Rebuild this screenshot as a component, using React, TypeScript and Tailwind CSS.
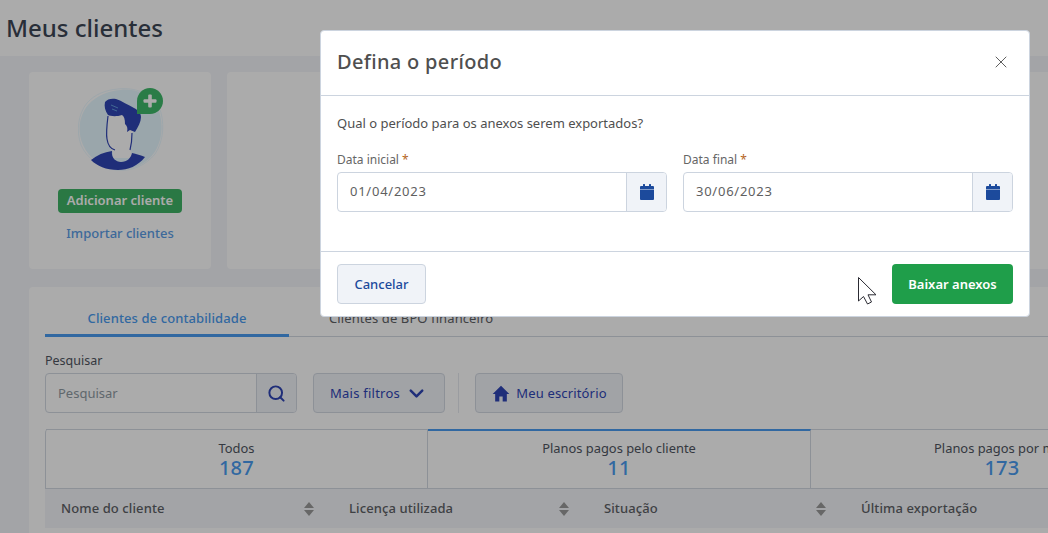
import React from "react";
import { Search, ChevronDown, X } from "lucide-react";

const font = "font-['Noto_Sans','Open_Sans',sans-serif]";

function Avatar() {
  return (
    <svg width="90" height="86" viewBox="0 0 90 86" className="block">
      <path d="M42 2C56 0 72 6 79 19C86 32 85 52 76 65C68 76 54 83 40 81C25 79 11 71 5 57C-1 43 1 28 10 17C18 8 30 3 42 2Z" fill="#e6f8ff" />
      <path d="M40 1C56 -1 74 5 81 19C87 33 86 53 77 66C68 77 54 84 38 82C23 80 9 71 3 57C-2 43 0 26 9 15C17 6 28 2 40 1Z" fill="none" stroke="#e6f8ff" strokeWidth="0.8" />
      <path d="M30 27L29 52C30 60 34 62 35 64L35 70L54 70L53 62L54 45L60 36L58 25Z" fill="#fff" />
      <path d="M13 72C19 67 26 64 34 63C33 70 38 74 43 74C49 74 53 70 54 65C58 66 63 67 67 69C60 78 50 82 40 82C28 82 19 78 13 72Z" fill="#2f45b5" />
      <path d="M30 28C29 36 28 46 29 51C30 58 33 61 37 62" fill="none" stroke="#2f45b5" strokeWidth="1.2" />
      <path d="M54 45C54 52 53 58 52 62" fill="none" stroke="#2f45b5" strokeWidth="1.2" />
      <path d="M27 14C29 11 34 10 38 11C44 13 50 17 56 20C60 22 63 25 63 29C63 34 60 39 57 44L52 42L49 44C50 40 49 38 47 36C47 31 46 28 44 27C38 29 32 28 30 27C27 23 26 18 27 14Z" fill="#2f45b5" />
      <path d="M33 17L40 20M34 21L39 23" stroke="#6fb2e6" strokeWidth="0.8" />
      <path d="M59 13C59 5.8 64.8 0 72 0C79.2 0 85 5.8 85 13C85 20.2 79.2 26 72 26L59 26Z" fill="#3fb96a" />
      <rect x="70.2" y="6.5" width="3.6" height="13" rx="1" fill="#fff" />
      <rect x="65.5" y="11.2" width="13" height="3.6" rx="1" fill="#fff" />
    </svg>
  );
}

function SortIcon() {
  return (
    <svg width="10" height="14" viewBox="0 0 10 14" className="block">
      <path d="M5 0L10 6H0Z M0 8H10L5 14Z" fill="#9a9a9a" />
    </svg>
  );
}

function CalendarIcon() {
  return (
    <svg width="14" height="16" viewBox="0 0 14 16" className="block" fill="#1c4a9c">
      <rect x="3" y="0" width="2" height="3" rx="0.5" />
      <rect x="9" y="0" width="2" height="3" rx="0.5" />
      <path d="M1 2H13A1 1 0 0 1 14 3V5H0V3A1 1 0 0 1 1 2Z" />
      <path d="M0 5.5H14V15A1 1 0 0 1 13 16H1A1 1 0 0 1 0 15Z" />
    </svg>
  );
}

function Stat({ label, value, active, first }: { label: string; value: string; active?: boolean; first?: boolean }) {
  return (
    <div className={`${first ? "w-[382px]" : "w-[383px]"} shrink-0 flex flex-col items-center border-r border-[#d3d9e2] ${active ? "border-t-2 border-t-[#4a9bf0] pt-[9px]" : "border-t border-t-[#d3d9e2] pt-[10px]"}`}>
      <span className="text-[12.9px] leading-[17px] text-[#4f5561]">{label}</span>
      <span className="text-[20px] leading-[22px] font-medium tracking-[0.3px] text-[#4a9bf0]">{value}</span>
    </div>
  );
}

function Th({ label, width }: { label: string; width: string }) {
  return (
    <div className={`${width} shrink-0 flex items-center justify-between pr-[19px] pl-4`}>
      <span className="text-[13px] font-medium tracking-[0.1px] text-[#5e6166]">{label}</span>
      <SortIcon />
    </div>
  );
}

function DateField({ label, value }: { label: string; value: string }) {
  return (
    <div className="flex-1 flex flex-col">
      <label className="text-[12px] leading-[18px] text-[#666] mb-[3px] pt-px">
        {label} <span className="text-[#b5651d]">*</span>
      </label>
      <div className="flex h-10 rounded border border-[#ccd4df] overflow-hidden">
        <div className="flex-1 flex items-center pl-3 text-[13px] text-[#5f5f5f] tracking-[0.75px]">{value}</div>
        <div className="w-10 flex items-center justify-center bg-[#f0f3f8] border-l border-[#ccd4df]">
          <CalendarIcon />
        </div>
      </div>
    </div>
  );
}

export default function App() {
  return (
    <div className={`relative w-[1048px] h-[533px] overflow-hidden bg-[#f3f5f9] ${font}`}>
      <header className="h-14 bg-white flex items-center pl-[6px]">
        <h1 className="text-[24px] font-medium text-[#3d4656]">Meus clientes</h1>
      </header>

      <main className="pl-[29px] pt-4 w-[1200px]">
        <div className="flex gap-4 h-[197px]">
          <div className="w-[182px] bg-white rounded flex flex-col items-center pt-4">
            <div className="ml-[6px]"><Avatar /></div>
            <button className="mt-[15px] w-[124px] h-6 rounded bg-[#3fb466] text-white text-[13px] font-semibold">Adicionar cliente</button>
            <a className="mt-[11px] text-[13px] font-medium text-[#5b9de6]">Importar clientes</a>
          </div>
          <div className="flex-1 bg-white rounded" />
        </div>

        <section className="mt-[18px] bg-white rounded pt-4 px-4 h-[260px]">
          <div className="flex border-b border-[#d3d9e2] h-[34px]">
            <div className="w-[244px] h-[34px] text-center text-[13px] tracking-[0.1px] font-medium text-[#4a9bf0] border-b-[3px] border-[#4a9bf0] pt-[6px]">Clientes de contabilidade</div>
            <div className="ml-10 text-[13px] tracking-[0.1px] text-[#5e6166] pt-[6px]">Clientes de BPO financeiro</div>
          </div>

          <div className="mt-[15px] text-[12.5px] leading-[18px] text-[#4f5561]">Pesquisar</div>
          <div className="mt-[3px] flex items-center h-10">
            <div className="w-[252px] h-10 flex rounded border border-[#d3d9e2] overflow-hidden">
              <div className="flex-1 flex items-center pl-3 pt-px text-[13px] text-[#8f9aa3]">Pesquisar</div>
              <div className="w-10 flex items-center justify-center bg-[#f0f3f8] border-l border-[#d3d9e2]">
                <Search size={19} strokeWidth={2.5} className="text-[#2f45b5]" />
              </div>
            </div>
            <button className="ml-4 w-[132px] h-10 pt-px rounded border border-[#d3d9e2] bg-[#f0f3f8] flex items-center justify-center gap-[5px] text-[13px] tracking-[0.25px] text-[#2f45b5]">
              Mais filtros <ChevronDown size={23} strokeWidth={2.6} />
            </button>
            <div className="ml-[13px] w-px h-10 bg-[#e6e9ef]" />
            <button className="ml-4 w-[148px] h-10 pt-px rounded border border-[#d3d9e2] bg-[#f0f3f8] flex items-center justify-center gap-[5px] text-[13px] tracking-[0.15px] text-[#2f45b5]">
              <svg width="20" height="20" viewBox="0 0 24 24" fill="#2f45b5" className="block"><path d="M10 21v-6h4v6h5v-9h3L12 2 2 12h3v9z" /></svg>
              Meu escritório
            </button>
          </div>

          <div className="mt-4 flex h-[59px] border-l border-[#d3d9e2] rounded-tl">
            <Stat label="Todos" value="187" first />
            <Stat label="Planos pagos pelo cliente" value="11" active />
            <Stat label="Planos pagos por mim" value="173" />
          </div>
          <div className="flex h-10 bg-[#f3f5f9] border-t border-[#d3d9e2]">
            <Th label="Nome do cliente" width="w-[288px]" />
            <Th label="Licença utilizada" width="w-[255px]" />
            <Th label="Situação" width="w-[257px]" />
            <Th label="Última exportação" width="w-[300px]" />
          </div>
        </section>
      </main>

      <div className="absolute inset-0 bg-black/[0.33]" />

      <div className="absolute left-[320px] top-[30px] w-[710px] h-[287px] bg-white rounded border border-[#ccd4df] flex flex-col">
        <div className="h-[65px] border-b border-[#ccd4df] flex items-center justify-between pl-4 pr-[18px] pb-[2px]">
          <h2 className="text-[20px] font-medium text-[#4f4f4f] tracking-[0.32px]">Defina o período</h2>
          <X size={20} strokeWidth={1.1} className="text-[#4f4f4f]" />
        </div>
        <div className="h-[156px] border-b border-[#ccd4df] px-4 pt-[18px]">
          <p className="text-[13px] leading-[18px] text-[#4f4f4f]">Qual o período para os anexos serem exportados?</p>
          <div className="mt-[18px] flex gap-4">
            <DateField label="Data inicial" value="01/04/2023" />
            <DateField label="Data final" value="30/06/2023" />
          </div>
        </div>
        <div className="flex-1 flex items-center justify-between px-4 pb-px">
          <button className="w-[89px] h-10 pt-[2px] rounded border border-[#ccd4df] bg-[#f0f3f8] text-[13px] font-medium text-[#1c4a9c]">Cancelar</button>
          <button className="w-[121px] h-10 pt-[2px] rounded bg-[#1f9e4a] text-[13px] font-semibold text-white">Baixar anexos</button>
        </div>
      </div>

      <svg width="20" height="29" viewBox="0 0 20 29" className="absolute left-[857px] top-[276px]">
        <path d="M1.5 1.5L1.5 25L6.5 20.5L10.5 28L14.5 26L11 18.8L19 18.8Z" fill="#fff" stroke="#2b2b33" strokeWidth="1" strokeLinejoin="miter" />
      </svg>
    </div>
  );
}
